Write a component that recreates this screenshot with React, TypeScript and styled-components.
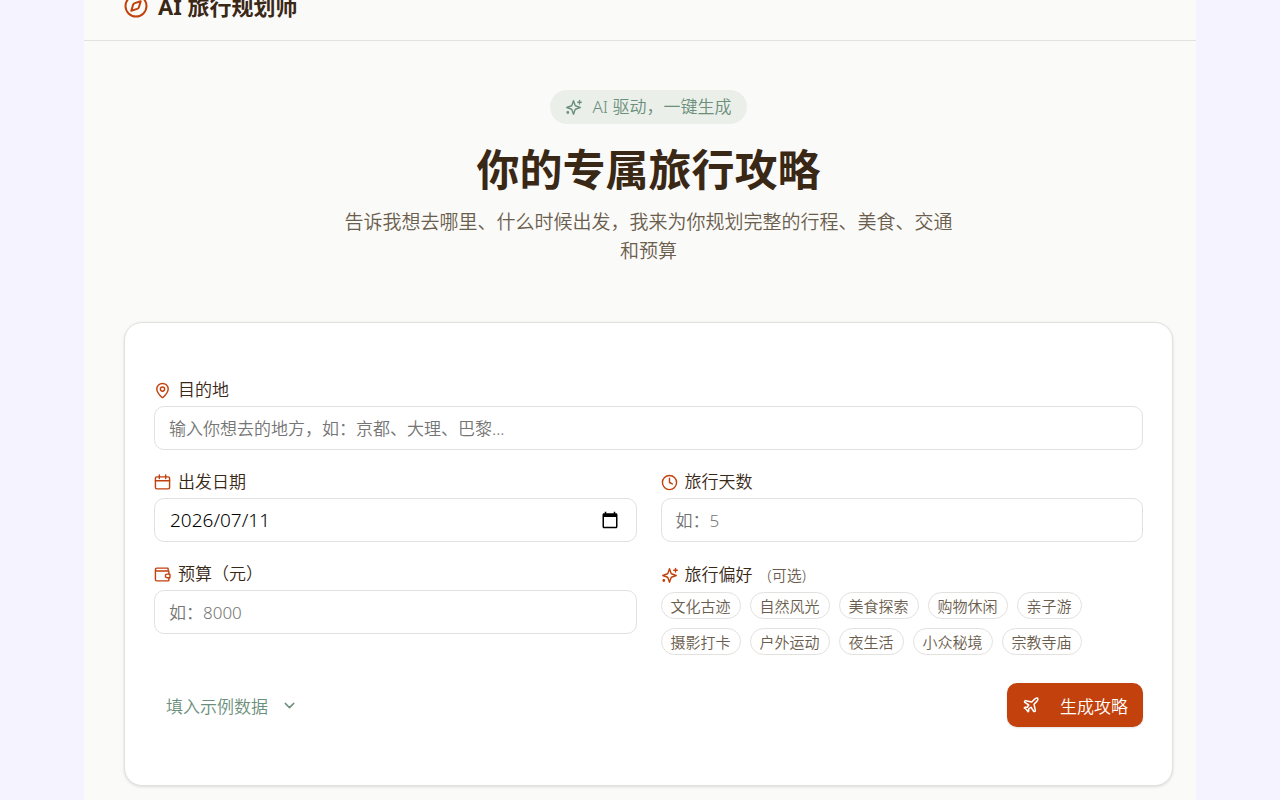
import React, { useState } from "react";
import styled, { createGlobalStyle, css } from "styled-components";
import { ChevronDown, Clock, MapPin, Plane } from "lucide-react";

const color = {
  ink: "#3a2817",
  muted: "#6b5d4d",
  accent: "#c2410c",
  sage: "#6b8f7b",
  line: "#e3e1de",
  paper: "#fafaf8",
};

const GlobalStyle = createGlobalStyle`
  * { box-sizing: border-box; }
  body {
    margin: 0;
    background: #f5f3ff;
    color: ${color.ink};
    font-family: "Noto Sans", "Noto Sans CJK SC", sans-serif;
    font-size: 17px;
    font-weight: 350;
  }
  button, input { font: inherit; }
  svg { flex: none; }
`;

const Page = styled.div`
  min-height: 100vh;
  padding: 0 84px;
  overflow: hidden;
`;

const Shell = styled.div`
  min-height: 100vh;
  background: ${color.paper};
`;

const Header = styled.header`
  display: flex;
  align-items: center;
  gap: 10px;
  height: 70px;
  margin-top: -29px;
  padding: 0 40px;
  border-bottom: 1px solid ${color.line};
  svg { color: ${color.accent}; }
`;

const Brand = styled.span`
  font-size: 22px;
  line-height: 30px;
  font-weight: 700;
`;

const Main = styled.main`
  padding: 49px 23px 14px 40px;
`;

const Hero = styled.section`
  display: flex;
  flex-direction: column;
  align-items: center;
  text-align: center;
`;

const Badge = styled.div`
  display: flex;
  align-items: center;
  gap: 10px;
  height: 34px;
  padding: 0 15px;
  border-radius: 17px;
  background: #ebefea;
  color: ${color.sage};
  line-height: 34px;
`;

const Title = styled.h1`
  margin: 20px 0 12px;
  font-size: 43px;
  line-height: 52px;
  font-weight: 700;
`;

const Subtitle = styled.p`
  max-width: 624px;
  margin: 0;
  color: ${color.muted};
  font-size: 19px;
  line-height: 29px;
`;

const Card = styled.form`
  display: flex;
  flex-direction: column;
  gap: 20px;
  margin-top: 56px;
  padding: 55px 29px 58px;
  border: 1px solid ${color.line};
  border-radius: 18px;
  background: #fff;
  box-shadow: 0 1px 3px rgba(0, 0, 0, 0.12);
`;

const Row = styled.div`
  display: grid;
  grid-template-columns: 1fr 1fr;
  gap: 24px;
`;

const Field = styled.div`
  display: flex;
  flex-direction: column;
  gap: 4px;
  min-width: 0;
`;

const labelStyle = css`
  display: flex;
  align-items: center;
  gap: 7px;
  line-height: 24px;
  svg { color: ${color.accent}; }
`;

const Label = styled.label`
  ${labelStyle}
`;

const GroupLabel = styled.div`
  ${labelStyle}
  line-height: 26px;
`;

const Optional = styled.span`
  margin-left: 8px;
  color: ${color.muted};
  font-size: 15px;
`;

const box = css`
  width: 100%;
  height: 44px;
  border: 1px solid ${color.line};
  border-radius: 10px;
  background: #fff;
`;

const Input = styled.input`
  ${box}
  padding: 0 14px;
  color: #000;
  &::placeholder { color: #757575; opacity: 1; }
`;

const DateBox = styled.div`
  ${box}
  display: flex;
  align-items: center;
  padding: 0 17px 0 15px;
`;

const DateInput = styled.input`
  flex: 1;
  min-width: 0;
  padding: 0;
  border: 0;
  outline: 0;
  background: none;
  color: #000;
  font-size: 19px;
`;

const PickerButton = styled.button`
  display: flex;
  padding: 0;
  border: 0;
  background: none;
  color: #000;
`;

const Tags = styled.div`
  display: flex;
  flex-wrap: wrap;
  gap: 9px;
`;

const Tag = styled.button<{ $on: boolean }>`
  height: 27px;
  padding: 0 9px;
  border: 1px solid ${(p) => (p.$on ? color.accent : color.line)};
  border-radius: 14px;
  background: #fff;
  color: ${(p) => (p.$on ? color.accent : color.muted)};
  font-size: 15px;
  line-height: 24px;
`;

const Actions = styled.div`
  display: flex;
  align-items: center;
  justify-content: space-between;
  margin-top: 8px;
`;

const GhostButton = styled.button`
  display: flex;
  align-items: center;
  gap: 13px;
  height: 44px;
  padding: 0 12px;
  border: 0;
  background: none;
  color: ${color.sage};
`;

const SubmitButton = styled.button`
  display: flex;
  align-items: center;
  gap: 20px;
  height: 44px;
  padding: 0 15px;
  border: 0;
  border-radius: 10px;
  background: ${color.accent};
  color: #fff;
  box-shadow: 0 1px 2px rgba(0, 0, 0, 0.12);
`;

const LineIcon = ({ size = 17, children }: { size?: number; children: React.ReactNode }) => (
  <svg
    width={size}
    height={size}
    viewBox="0 0 24 24"
    fill="none"
    stroke="currentColor"
    strokeWidth="2"
    strokeLinecap="round"
    strokeLinejoin="round"
    aria-hidden="true"
  >
    {children}
  </svg>
);

const CompassIcon = () => (
  <LineIcon size={24}>
    <circle cx="12" cy="12" r="10.500" />
    <path d="M16.700 7.300 14.900 13.200Q14.500 14.500 13.200 14.900L7.300 16.700 9.100 10.800Q9.500 9.500 10.800 9.100Z" />
  </LineIcon>
);

const SparklesIcon = () => (
  <LineIcon>
    <path d="M12 2.500 14.100 8.400Q14.500 9.500 15.600 9.900L21.500 12 15.600 14.100Q14.500 14.500 14.100 15.600L12 21.500 9.900 15.600Q9.500 14.500 8.400 14.100L2.500 12 8.400 9.900Q9.500 9.500 9.900 8.400Z" />
    <path d="M20.500 2v5M18 4.500h5" />
    <circle cx="4" cy="19" r="1" />
  </LineIcon>
);

const CalendarIcon = () => (
  <LineIcon>
    <rect x="2" y="4" width="20" height="17" rx="2" />
    <path d="M7.500 1.500v5M16.500 1.500v5M2 9.500h20" />
  </LineIcon>
);

const WalletIcon = () => (
  <LineIcon>
    <path d="M20 7V4a1 1 0 0 0-1-1H4a2 2 0 0 0 0 4H20a1 1 0 0 1 1 1v3M21 17v3a1 1 0 0 1-1 1H4a2 2 0 0 1-2-2V5" />
    <path d="M22.500 11.500H18.500a2.500 2.500 0 0 0 0 5h4z" />
  </LineIcon>
);

const PickerIcon = () => (
  <svg width="18" height="18" viewBox="0 0 24 24" fill="currentColor" aria-hidden="true">
    <path d="M20 3h-1V1h-2v2H7V1H5v2H4c-1.100 0-2 .9-2 2v16c0 1.100.9 2 2 2h16c1.100 0 2-.9 2-2V5c0-1.100-.9-2-2-2zm0 18H4V8h16v13z" />
  </svg>
);

const preferences = [
  "文化古迹", "自然风光", "美食探索", "购物休闲", "亲子游",
  "摄影打卡", "户外运动", "夜生活", "小众秘境", "宗教寺庙",
];

export default function App() {
  const [picked, setPicked] = useState<string[]>([]);
  const toggle = (name: string) =>
    setPicked((list) =>
      list.includes(name) ? list.filter((n) => n !== name) : [...list, name]
    );

  return (
    <Page>
      <GlobalStyle />
      <Shell>
        <Header>
          <CompassIcon />
          <Brand>AI 旅行规划师</Brand>
        </Header>
        <Main>
          <Hero>
            <Badge>
              <SparklesIcon />
              AI 驱动，一键生成
            </Badge>
            <Title>你的专属旅行攻略</Title>
            <Subtitle>
              告诉我想去哪里、什么时候出发，我来为你规划完整的行程、美食、交通和预算
            </Subtitle>
          </Hero>
          <Card onSubmit={(e) => e.preventDefault()}>
            <Field>
              <Label htmlFor="place"><MapPin size={17} />目的地</Label>
              <Input id="place" placeholder="输入你想去的地方，如：京都、大理、巴黎..." />
            </Field>
            <Row>
              <Field>
                <Label htmlFor="date"><CalendarIcon />出发日期</Label>
                <DateBox>
                  <DateInput id="date" defaultValue="2026/07/11" />
                  <PickerButton type="button" aria-label="选择日期"><PickerIcon /></PickerButton>
                </DateBox>
              </Field>
              <Field>
                <Label htmlFor="days"><Clock size={17} />旅行天数</Label>
                <Input id="days" inputMode="numeric" placeholder="如：5" />
              </Field>
            </Row>
            <Row>
              <Field>
                <Label htmlFor="budget"><WalletIcon />预算（元）</Label>
                <Input id="budget" inputMode="numeric" placeholder="如：8000" />
              </Field>
              <Field role="group" aria-labelledby="prefs">
                <GroupLabel id="prefs">
                  <SparklesIcon />旅行偏好<Optional>(可选)</Optional>
                </GroupLabel>
                <Tags>
                  {preferences.map((name) => (
                    <Tag
                      key={name}
                      type="button"
                      $on={picked.includes(name)}
                      aria-pressed={picked.includes(name)}
                      onClick={() => toggle(name)}
                    >
                      {name}
                    </Tag>
                  ))}
                </Tags>
              </Field>
            </Row>
            <Actions>
              <GhostButton type="button">填入示例数据<ChevronDown size={17} /></GhostButton>
              <SubmitButton type="submit"><Plane size={18} />生成攻略</SubmitButton>
            </Actions>
          </Card>
        </Main>
      </Shell>
    </Page>
  );
}
